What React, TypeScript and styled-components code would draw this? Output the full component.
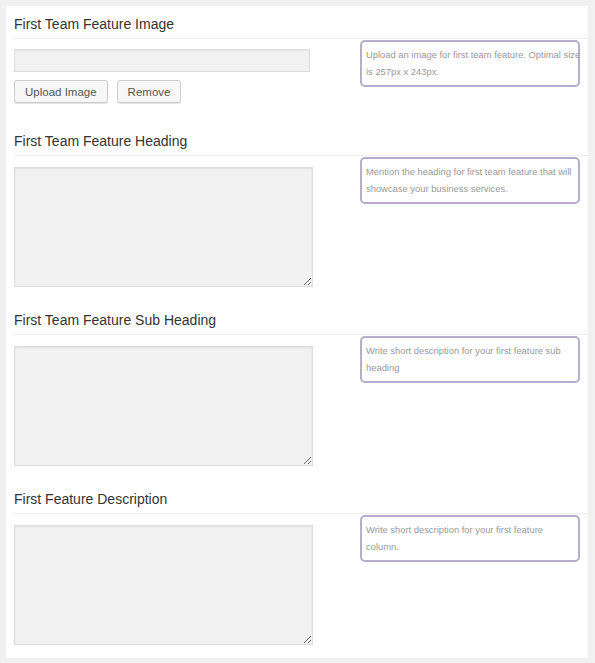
import React from 'react';
import styled, { createGlobalStyle } from 'styled-components';

const GlobalStyle = createGlobalStyle`
  html, body {
    margin: 0;
    padding: 0;
    background: #f1f1f1;
    font-family: "Liberation Sans", Arial, sans-serif;
  }
`;

type Field = {
  title: string;
  hint: string[];
  kind: 'image' | 'text';
};

// hint text is kept in its wrapped lines, as in the screenshot
const fields: Field[] = [
  {
    title: 'First Team Feature Image',
    hint: ['Upload an image for first team feature. Optimal size', 'is 257px x 243px.'],
    kind: 'image',
  },
  {
    title: 'First Team Feature Heading',
    hint: ['Mention the heading for first team feature that will', 'showcase your business services.'],
    kind: 'text',
  },
  {
    title: 'First Team Feature Sub Heading',
    hint: ['Write short description for your first feature sub', 'heading'],
    kind: 'text',
  },
  {
    title: 'First Feature Description',
    hint: ['Write short description for your first feature', 'column.'],
    kind: 'text',
  },
];

const App: React.FC = () => {
  return (
    <>
      <GlobalStyle />
      <Panel>
        {fields.map((f) => (
          <Section key={f.title}>
            <Title>{f.title}</Title>
            <Row>
              <Left>
                {f.kind === 'image' ? (
                  <>
                    <UrlInput type="text" readOnly />
                    <Buttons>
                      <Button>Upload Image</Button>
                      <Button>Remove</Button>
                    </Buttons>
                  </>
                ) : (
                  <TextArea />
                )}
              </Left>
              <Hint>
                {f.hint.map((line) => (
                  <HintLine key={line}>{line}</HintLine>
                ))}
              </Hint>
            </Row>
          </Section>
        ))}
      </Panel>
    </>
  );
};

const Panel = styled.div`
  margin: 6px;
  width: 582px;
  background: #fff;
  padding-top: 8px;
`;

const Section = styled.div`
  padding-left: 8px;
  padding-bottom: 23px;

  &:last-child {
    padding-bottom: 13px;
  }
`;

const Title = styled.h3`
  margin: 0;
  font-size: 14px;
  font-weight: 400;
  line-height: 20px;
  color: #333;
  padding-bottom: 4px;
  border-bottom: 1px solid #eee;
`;

const Row = styled.div`
  display: flex;
  justify-content: space-between;
  align-items: flex-start;
`;

const Left = styled.div`
  padding-top: 10px;
  width: 300px;
`;

const UrlInput = styled.input`
  display: block;
  box-sizing: border-box;
  width: 296px;
  height: 23px;
  margin: 0;
  background: #f1f1f1;
  border: 1px solid #ddd;
  box-shadow: inset 0 1px 1px rgba(0, 0, 0, 0.05);
  outline: none;
`;

const Buttons = styled.div`
  display: flex;
  gap: 9px;
  margin-top: 8px;
  margin-bottom: 5px;
`;

const Button = styled.button`
  box-sizing: border-box;
  height: 23px;
  padding: 0 10px;
  font-family: "Liberation Sans", Arial, sans-serif;
  font-size: 11.5px;
  color: #555;
  background: #f7f7f7;
  border: 1px solid #ccc;
  border-radius: 3px;
  box-shadow: 0 1px 0 #e4e4e4;
`;

const TextArea = styled.textarea`
  display: block;
  box-sizing: border-box;
  width: 299px;
  height: 120px;
  margin: 1px 0 0;
  background: #f1f1f1;
  border: 1px solid #ddd;
  box-shadow: inset 0 1px 2px rgba(0, 0, 0, 0.07);
  outline: none;
`;

const Hint = styled.div`
  box-sizing: border-box;
  width: 220px;
  margin-right: 8px;
  margin-top: 1px;
  padding: 5px 0 5px 4px;
  border: 2px solid #b9abcb;
  border-radius: 5px;
`;

const HintLine = styled.span`
  display: block;
  white-space: nowrap;
  font-size: 9.4px;
  line-height: 16.5px;
  color: #999;
`;

export default App;
